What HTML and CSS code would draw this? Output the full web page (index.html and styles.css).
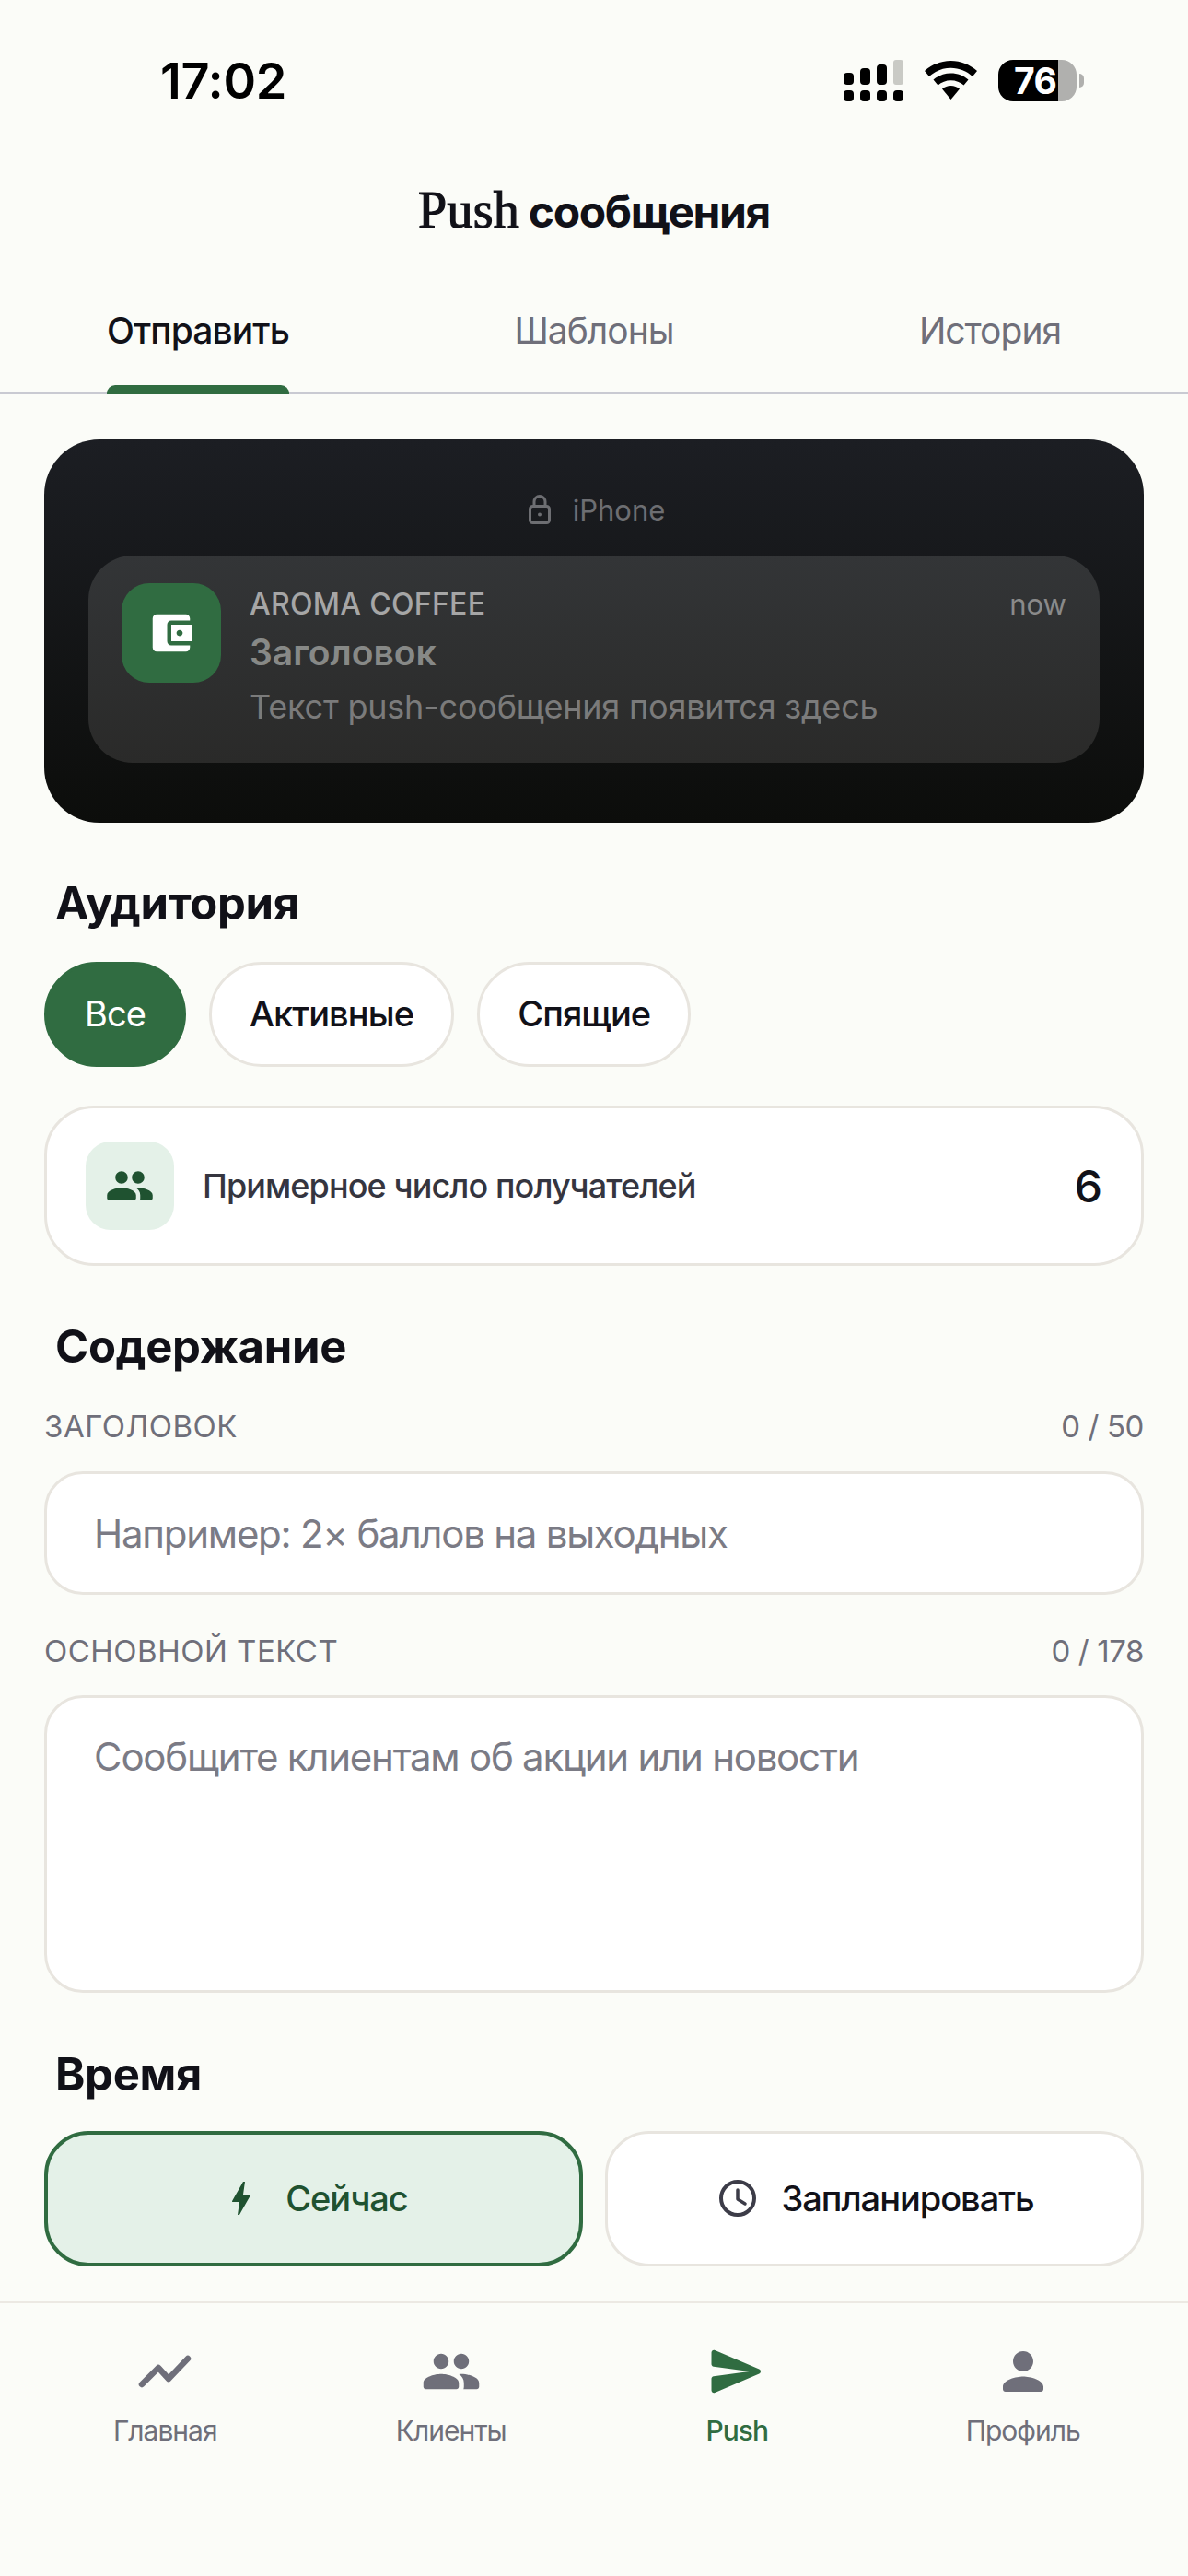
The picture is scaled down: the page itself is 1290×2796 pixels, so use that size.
FILE: index.html
```html
<!DOCTYPE html>
<html lang="ru">

<head>
    <meta charset="UTF-8">
    <meta name="viewport" content="width=device-width, initial-scale=1.0">
    <title>Push сообщения</title>
    <link rel="stylesheet" href="styles.css">
</head>

<body>
    <div class="app">
        <div class="status-bar">
            <span class="status-time">17:02</span>
            <div class="status-icons">
                <svg class="icon-signal" width="65" height="45" viewBox="0 0 65 45">
                    <rect x="0" y="14" width="11" height="13" rx="4" fill="#000" />
                    <rect x="18" y="9" width="11" height="18" rx="4" fill="#000" />
                    <rect x="36" y="5" width="11" height="22" rx="4" fill="#000" />
                    <rect x="54" y="0" width="11" height="27" rx="3" fill="#c9cac5" />
                    <rect x="0" y="33" width="11" height="12" rx="4" fill="#000" />
                    <rect x="18" y="33" width="11" height="12" rx="4" fill="#000" />
                    <rect x="36" y="33" width="11" height="12" rx="4" fill="#000" />
                    <rect x="54" y="33" width="11" height="12" rx="4" fill="#000" />
                </svg>
                <svg class="icon-wifi" width="57" height="42" viewBox="0 0 57 42">
                    <path d="M28.5 0C17.6 0 7.7 4.2 0 11l5 6C11.300 11.300 19.500 7.800 28.500 7.800S45.700 11.300 52 17l5-6C49.300 4.200 39.400 0 28.500 0z" fill="#000" />
                    <path d="M28.500 13.500C21.300 13.500 14.700 16.100 9.500 20.500l5 6C18.300 23.300 23.200 21.300 28.500 21.300S38.700 23.300 42.500 26.500l5-6C42.300 16.100 35.700 13.500 28.500 13.500z" fill="#000" />
                    <path d="M28.500 27C25 27 21.600 28.300 19 30.500L28.500 42 38 30.500C35.400 28.300 32 27 28.500 27z" fill="#000" />
                </svg>
                <div class="battery">
                    <div class="battery-body">76</div>
                    <div class="battery-nub"></div>
                </div>
            </div>
        </div>

        <h1 class="page-title"><span class="page-title-serif">Push</span> сообщения</h1>

        <div class="tabs">
            <div class="tab"><span class="tab-label tab-label-active">Отправить</span></div>
            <div class="tab"><span class="tab-label">Шаблоны</span></div>
            <div class="tab"><span class="tab-label">История</span></div>
        </div>

        <div class="content">
            <div class="preview">
                <div class="preview-device">
                    <svg width="36" height="36" viewBox="0 0 36 36" fill="none" stroke="#6d6e72" stroke-width="3">
                        <rect x="7.500" y="14.500" width="21" height="18" rx="3" />
                        <path d="M12 14.500V9.500a6 6 0 0 1 12 0v5" />
                        <circle cx="18" cy="23.500" r="2" fill="#6d6e72" stroke="none" />
                    </svg>
                    <span>iPhone</span>
                </div>
                <div class="notification">
                    <div class="app-icon">
                        <svg width="54" height="54" viewBox="0 0 24 24" fill="#fff">
                            <path d="M21 18v1c0 1.100-.9 2-2 2H5c-1.110 0-2-.9-2-2V5c0-1.100.89-2 2-2h14c1.100 0 2 .9 2 2v1h-9c-1.110 0-2 .9-2 2v8c0 1.100.89 2 2 2h9zm-9-2h10V8H12v8zm4-2.500c-.83 0-1.500-.67-1.500-1.500s.67-1.500 1.500-1.500 1.500.67 1.500 1.500-.67 1.500-1.500 1.500z" />
                        </svg>
                    </div>
                    <div class="notification-body">
                        <div class="notification-head">
                            <span class="notification-app">AROMA COFFEE</span>
                            <span class="notification-time">now</span>
                        </div>
                        <div class="notification-title">Заголовок</div>
                        <div class="notification-text">Текст push-сообщения появится здесь</div>
                    </div>
                </div>
            </div>

            <h2 class="section-title">Аудитория</h2>
            <div class="chips">
                <button class="chip chip-active">Все</button>
                <button class="chip">Активные</button>
                <button class="chip">Спящие</button>
            </div>

            <div class="recipients">
                <div class="recipients-icon">
                    <svg width="54" height="54" viewBox="0 0 24 24" fill="#1f5230">
                        <path d="M16 11c1.660 0 2.990-1.340 2.990-3S17.660 5 16 5s-3 1.340-3 3 1.340 3 3 3zm-8 0c1.660 0 2.990-1.340 2.990-3S9.660 5 8 5 5 6.340 5 8s1.340 3 3 3zm0 2c-2.330 0-7 1.170-7 3.500V18c0 .55.45 1 1 1h12c.55 0 1-.45 1-1v-1.500c0-2.330-4.670-3.500-7-3.500zm8 0c-.29 0-.62.02-.97.05.02.01.03.03.04.04 1.140.83 1.930 1.940 1.930 3.410V18c0 .35-.07.69-.18 1H22c.55 0 1-.45 1-1v-1.500c0-2.330-4.670-3.500-7-3.500z" />
                    </svg>
                </div>
                <span class="recipients-label">Примерное число получателей</span>
                <span class="recipients-count">6</span>
            </div>

            <h2 class="section-title section-title-content">Содержание</h2>
            <div class="field-label field-label-first">
                <span>ЗАГОЛОВОК</span>
                <span class="field-counter">0 / 50</span>
            </div>
            <input class="text-input" type="text" placeholder="Например: 2× баллов на выходных">
            <div class="field-label">
                <span>ОСНОВНОЙ ТЕКСТ</span>
                <span class="field-counter">0 / 178</span>
            </div>
            <textarea class="text-area" placeholder="Сообщите клиентам об акции или новости"></textarea>

            <h2 class="section-title section-title-time">Время</h2>
            <div class="time-options">
                <button class="time-option time-option-active">
                    <svg width="48" height="48" viewBox="0 0 24 24" fill="#1f5230">
                        <path d="M11 21h-1l1-7H7.500c-.58 0-.57-.32-.38-.66.19-.34.05-.08.07-.12C8.480 10.940 10.420 7.540 13 3h1l-1 7h3.500c.49 0 .56.33.47.51l-.07.15C12.960 17.550 11 21 11 21z" />
                    </svg>
                    <span>Сейчас</span>
                </button>
                <button class="time-option">
                    <svg width="48" height="48" viewBox="0 0 48 48" fill="none" stroke="#3c3c48" stroke-width="4" stroke-linecap="round" stroke-linejoin="round">
                        <circle cx="24" cy="24" r="18" />
                        <path d="M24 15v10l8 5" stroke-width="3.500" />
                    </svg>
                    <span>Запланировать</span>
                </button>
            </div>
        </div>

        <nav class="bottom-nav">
            <div class="nav-item">
                <svg width="66" height="66" viewBox="0 0 66 66" fill="none" stroke="#6f6f7a" stroke-width="6.500" stroke-linecap="round" stroke-linejoin="round">
                    <path d="M8 47 26 29l11 12 21-22" />
                </svg>
                <span>Главная</span>
            </div>
            <div class="nav-item">
                <svg width="66" height="66" viewBox="0 0 24 24" fill="#6f6f7a">
                    <path d="M16 11c1.660 0 2.990-1.340 2.990-3S17.660 5 16 5s-3 1.340-3 3 1.340 3 3 3zm-8 0c1.660 0 2.990-1.340 2.990-3S9.660 5 8 5 5 6.340 5 8s1.340 3 3 3zm0 2c-2.330 0-7 1.170-7 3.500V18c0 .55.45 1 1 1h12c.55 0 1-.45 1-1v-1.500c0-2.330-4.670-3.500-7-3.500zm8 0c-.29 0-.62.02-.97.05.02.01.03.03.04.04 1.140.83 1.930 1.940 1.930 3.410V18c0 .35-.07.69-.18 1H22c.55 0 1-.45 1-1v-1.500c0-2.330-4.670-3.500-7-3.500z" />
                </svg>
                <span>Клиенты</span>
            </div>
            <div class="nav-item nav-item-active">
                <svg width="66" height="66" viewBox="0 0 24 24" fill="#306c41">
                    <path d="M3.400 20.400l17.450-7.480c.81-.35.81-1.490 0-1.840L3.400 3.600c-.66-.29-1.390.2-1.390.91L2 9.120c0 .5.37.93.87.99L17 12 2.870 13.880c-.5.07-.87.5-.87 1l.01 4.610c0 .71.73 1.200 1.390.91z" />
                </svg>
                <span>Push</span>
            </div>
            <div class="nav-item">
                <svg width="66" height="66" viewBox="0 0 24 24" fill="#6f6f7a">
                    <path d="M12 12c2.210 0 4-1.790 4-4s-1.790-4-4-4-4 1.790-4 4 1.790 4 4 4zm0 2c-2.670 0-8 1.340-8 4v1c0 .55.45 1 1 1h14c.55 0 1-.45 1-1v-1c0-2.660-5.330-4-8-4z" />
                </svg>
                <span>Профиль</span>
            </div>
        </nav>
    </div>
</body>

</html>
```

FILE: styles.css
```css
* {
    box-sizing: border-box;
}
body {
    margin: 0;
    background-color: #fbfcf8;
    color: #111118;
    font-family: Inter, "Noto Sans", sans-serif;
}
.app {
    display: flex;
    flex-direction: column;
    width: 1290px;
    height: 2796px;
    overflow: hidden;
}

/* status bar */
.status-bar {
    display: flex;
    justify-content: space-between;
    align-items: center;
    height: 174px;
    padding: 0 113px 0 174px;
}
.status-time {
    font-size: 54px;
    font-weight: 600;
    color: #000;
    letter-spacing: -0.3px;
}
.status-icons {
    display: flex;
    align-items: center;
    gap: 23px;
}
.battery {
    display: flex;
    align-items: center;
    gap: 3px;
}
.battery-body {
    width: 85px;
    height: 45px;
    padding-left: 17px;
    border-radius: 16px;
    background: linear-gradient(90deg, #000 76%, #b0b0ae 76%);
    color: #fff;
    font-size: 39px;
    font-weight: 700;
    line-height: 45px;
    letter-spacing: -0.5px;
}
.battery-nub {
    width: 5px;
    height: 15px;
    border-radius: 0 8px 8px 0;
    background-color: #b0b0ae;
}

/* header */
.page-title {
    height: 110px;
    margin: 0;
    color: #111118;
    font-size: 48px;
    font-weight: 700;
    line-height: 108px;
    letter-spacing: -1.4px;
    text-align: center;
}
.page-title-serif {
    font-family: "Liberation Serif", serif;
    font-size: 56px;
    font-weight: 400;
    letter-spacing: 0.2px;
    -webkit-text-stroke: 1.2px #111118;
}
.tabs {
    display: grid;
    grid-template-columns: repeat(3, 1fr);
    height: 144px;
    border-bottom: 3px solid #c9cad2;
}
.tab {
    display: flex;
    justify-content: center;
}
.tab-label {
    position: relative;
    height: 144px;
    padding-top: 45px;
    color: #6f6f7a;
    font-size: 39px;
    font-weight: 400;
    line-height: 60px;
    letter-spacing: -1px;
}
.tab-label-active {
    color: #111118;
    font-weight: 550;
    letter-spacing: -0.9px;
}
.tab-label-active::after {
    content: "";
    position: absolute;
    left: 0;
    right: 0;
    bottom: 0;
    height: 10px;
    border-radius: 9px 9px 0 0;
    background-color: #306c41;
}

.content {
    padding: 0 48px;
}

/* notification preview */
.preview {
    margin-top: 49px;
    padding: 54px 48px 65px;
    border-radius: 60px;
    background: linear-gradient(180deg, #1c1e23, #0c0d0b);
}
.preview-device {
    display: flex;
    justify-content: center;
    align-items: center;
    gap: 18px;
    height: 44px;
    color: #6d6e72;
    font-size: 31px;
}
.notification {
    display: flex;
    gap: 31px;
    margin-top: 28px;
    padding: 30px 36px 37px;
    border-radius: 48px;
    background: linear-gradient(180deg, #333537, #2a2a29);
}
.app-icon {
    display: flex;
    justify-content: center;
    align-items: center;
    flex: none;
    width: 108px;
    height: 108px;
    border-radius: 30px;
    background-color: #306c41;
}
.notification-body {
    flex: 1;
}
.notification-head {
    display: flex;
    justify-content: space-between;
    align-items: center;
    height: 44px;
}
.notification-app {
    color: #a6a6a6;
    font-size: 32px;
    font-weight: 500;
    letter-spacing: 0.3px;
}
.notification-time {
    color: #8a8a8a;
    font-size: 31px;
}
.notification-title {
    margin-top: 7px;
    color: #878987;
    font-size: 39px;
    font-weight: 600;
    line-height: 48px;
}
.notification-text {
    margin-top: 11px;
    color: #7b7b7b;
    font-size: 36px;
    line-height: 48px;
    letter-spacing: -0.2px;
}

/* sections */
.section-title {
    height: 60px;
    margin: 58px 0 0;
    padding-left: 12px;
    color: #111118;
    font-size: 49px;
    font-weight: 700;
    line-height: 60px;
    letter-spacing: -0.3px;
}
.section-title-time {
    margin-top: 59px;
}
.chips {
    display: flex;
    gap: 25px;
    margin-top: 33px;
}
.chip {
    height: 114px;
    padding: 0 41px 2px;
    border: 3px solid #e8e5df;
    border-radius: 57px;
    background-color: #fff;
    color: #111118;
    font-family: inherit;
    font-size: 38px;
    font-weight: 450;
    letter-spacing: -0.9px;
}
.chip-active {
    border-color: #306c41;
    background-color: #306c41;
    color: #fff;
    font-weight: 400;
}
.recipients {
    display: flex;
    align-items: center;
    gap: 31px;
    height: 174px;
    margin-top: 42px;
    padding: 0 42px;
    border: 3px solid #e8e5df;
    border-radius: 54px;
    background-color: #fff;
}
.recipients-icon {
    display: flex;
    justify-content: center;
    align-items: center;
    flex: none;
    width: 96px;
    height: 96px;
    border-radius: 27px;
    background-color: #e4f1e8;
}
.recipients-label {
    flex: 1;
    color: #35353f;
    font-size: 36px;
    font-weight: 450;
    letter-spacing: -0.9px;
}
.recipients-count {
    color: #111118;
    font-size: 48px;
    font-weight: 500;
}

/* form */
.field-label {
    display: flex;
    justify-content: space-between;
    align-items: center;
    height: 40px;
    margin-top: 41px;
    color: #6f6f7a;
    font-size: 33px;
    font-weight: 400;
    letter-spacing: 0.5px;
}
.field-label-first {
    margin-top: 36px;
}
.field-counter {
    letter-spacing: -0.4px;
}
.text-input,
.text-area {
    display: block;
    width: 100%;
    margin-top: 29px;
    padding: 0 51px;
    border: 3px solid #e8e5df;
    border-radius: 42px;
    background-color: #fff;
    color: #111118;
    font-family: inherit;
    font-size: 42px;
    letter-spacing: -1.25px;
    outline: none;
    resize: none;
}
.text-input {
    height: 134px;
}
.text-area {
    height: 323px;
    margin-top: 28px;
    padding-top: 37px;
    line-height: 54px;
}
.text-input::placeholder,
.text-area::placeholder {
    color: #7b7b85;
    opacity: 1;
}
.time-options {
    display: grid;
    grid-template-columns: 1fr 1fr;
    gap: 24px;
    margin-top: 31px;
}
.time-option {
    display: flex;
    justify-content: center;
    align-items: center;
    gap: 24px;
    height: 147px;
    padding-bottom: 2px;
    border: 3px solid #e8e5df;
    border-radius: 48px;
    background-color: #fff;
    color: #111118;
    font-family: inherit;
    font-size: 38px;
    font-weight: 550;
    letter-spacing: -1.05px;
}
.time-option-active {
    border: 4.500px solid #306c41;
    background-color: #e4f1e8;
    color: #1f5230;
}

/* bottom navigation */
.bottom-nav {
    display: grid;
    grid-template-columns: repeat(4, 1fr);
    height: 299px;
    margin-top: auto;
    padding: 41px 24px 0;
    border-top: 3px solid #ece9e3;
}
.nav-item {
    display: flex;
    flex-direction: column;
    align-items: center;
    gap: 11px;
    color: #6f6f7a;
    font-size: 30px;
    font-weight: 400;
    line-height: 40px;
    letter-spacing: -1px;
}
.nav-item-active {
    color: #306c41;
    font-weight: 500;
}
```
